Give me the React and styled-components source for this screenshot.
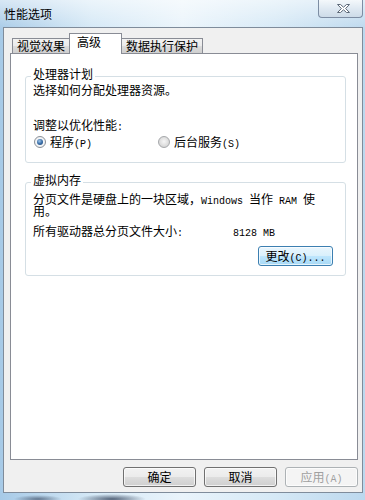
import React from 'react';
import styled, { createGlobalStyle } from 'styled-components';

const GlobalStyle = createGlobalStyle`
  html, body {
    margin: 0;
    padding: 0;
  }

  body {
    width: 365px;
    height: 500px;
    overflow: hidden;
    color: #000;
    font-family: "Noto Sans CJK SC", sans-serif;
    font-size: 12px;
  }
`;

const Frame = styled.div`
  display: flex;
  flex-direction: column;
  width: 365px;
  height: 500px;
  background:
    radial-gradient(ellipse 34px 5px at 112px 499px, rgba(40, 55, 80, 0.75), transparent),
    radial-gradient(ellipse 24px 4px at 38px 499px, rgba(40, 55, 80, 0.6), transparent),
    linear-gradient(180deg, rgba(255, 255, 255, 0.55) 0, rgba(255, 255, 255, 0) 30px),
    linear-gradient(90deg, #a7cae7 0, #d4e8f6 25%, #eaf4fb 50%, #d6e9f6 75%, #bcd8ee 100%);
`;

const TitleBar = styled.div`
  display: flex;
  align-items: flex-start;
  height: 27px;
  padding-left: 4px;
`;

const Title = styled.span`
  line-height: 27px;
  font-size: 12px;
`;

const CloseButton = styled.div`
  display: flex;
  align-items: center;
  justify-content: center;
  box-sizing: border-box;
  width: 45px;
  height: 18px;
  margin-left: auto;
  margin-right: 2px;
  padding-left: 6px;
  border: 1px solid #7d8da3;
  border-top: none;
  border-radius: 0 0 4px 4px;
  background: linear-gradient(180deg, #f4f8fb 0, #dfe9f2 50%, #cddbe8 100%);
`;

const Body = styled.div`
  display: flex;
  flex-direction: column;
  box-sizing: border-box;
  height: 466px;
  margin: 0 2px 0 3px;
  padding: 6px 4px 0 6px;
  border: 1px solid #7f8c9b;
  background: #f0f0f0;
`;

const TabRow = styled.div`
  display: flex;
  align-items: flex-end;
  height: 20px;
  margin-bottom: -1px;
  padding-left: 2px;
`;

const Tab = styled.div`
  box-sizing: border-box;
  width: ${p => p.$w}px;
  height: ${p => (p.$active ? 21 : 15)}px;
  margin: ${p => (p.$active ? '0 -1px 0 -1px' : '0 0 1px 0')};
  padding-left: ${p => (p.$active ? 7 : 0)}px;
  position: relative;
  z-index: ${p => (p.$active ? 1 : 0)};
  border: 1px solid #898c95;
  border-bottom: none;
  background: ${p => (p.$active ? '#fff' : 'linear-gradient(180deg, #f2f2f2 0, #ebebeb 50%, #dddddd 51%, #cfcfcf 100%)')};
  line-height: ${p => (p.$active ? 16 : 14)}px;
  text-align: ${p => (p.$active ? 'left' : 'center')};
  white-space: nowrap;
`;

const Panel = styled.div`
  box-sizing: border-box;
  height: 407px;
  padding: 0 11px 0 14px;
  border: 1px solid #898c95;
  background: #fff;
`;

const Group = styled.fieldset`
  min-width: 0;
  margin: ${p => p.$top}px 0 0;
  padding: 0 12px 9px 7px;
  border: 1px solid #d5dfe5;
  border-radius: 3px;
`;

const Legend = styled.legend`
  margin-left: -2px;
  padding: 0 2px 4px;
  line-height: 12px;
`;

const Line = styled.div`
  margin-top: ${p => p.$top || 0}px;
  line-height: 12px;
`;

const Lat = styled.span`
  font-family: "Liberation Mono", monospace;
  font-size: 10px;
  line-height: 0;
`;

const RadioRow = styled.div`
  display: flex;
  margin: 5px 0 5px;
  line-height: 12px;
`;

const Option = styled.label`
  display: flex;
  align-items: center;
  gap: 4px;
  width: ${p => p.$w}px;
`;

const Radio = styled.span`
  display: flex;
  align-items: center;
  justify-content: center;
  box-sizing: border-box;
  width: 12px;
  height: 12px;
  margin-left: 1px;
  border: 1px solid ${p => (p.$checked ? '#8a8f96' : '#a6a8ab')};
  border-radius: 50%;
  background: ${p => (p.$checked
    ? 'radial-gradient(circle at 50% 50%, #ffffff 0, #e9ecef 100%)'
    : 'radial-gradient(circle at 50% 45%, #f6f6f6 0, #dcdcdc 60%, #c9c9c9 100%)')};

  &::after {
    content: '';
    display: ${p => (p.$checked ? 'block' : 'none')};
    width: 6px;
    height: 6px;
    border-radius: 50%;
    background: radial-gradient(circle at 40% 35%, #9fc6ea 0, #3c6fa8 50%, #173e70 100%);
  }
`;

const SizeRow = styled.div`
  display: flex;
  align-items: baseline;
  margin-top: 8px;
  line-height: 12px;
`;

const SizeLabel = styled.span`
  width: 200px;
`;

const SizeValue = styled.span`
  font-family: "Liberation Mono", monospace;
  font-size: 10px;
`;

const ButtonRow = styled.div`
  display: flex;
  justify-content: flex-end;
  gap: 8px;
  margin-top: ${p => p.$top}px;
`;

const Button = styled.button`
  box-sizing: border-box;
  width: ${p => p.$w}px;
  height: 20px;
  padding: 0;
  border: 1px solid ${p => (p.$focus ? '#3c7fb1' : p.disabled ? '#adb2b5' : '#707070')};
  border-radius: 3px;
  background: ${p => (p.$focus
    ? 'linear-gradient(180deg, #eaf6fd 0, #d9f0fc 50%, #bee6fd 51%, #a7d9f5 100%)'
    : p.disabled
      ? '#f4f4f4'
      : 'linear-gradient(180deg, #f2f2f2 0, #ebebeb 50%, #dddddd 51%, #cfcfcf 100%)')};
  box-shadow: inset 0 0 0 1px rgba(255, 255, 255, 0.7);
  color: ${p => (p.disabled ? '#a0a0a0' : '#000')};
  font-family: "Noto Sans CJK SC", sans-serif;
  font-size: 12px;
  line-height: 18px;
`;

const CloseIcon = () => (
  <svg width="15" height="11" viewBox="0 0 15 11">
    <polygon
      points="1.5,1.5 4.5,1.5 7.5,4.2 10.5,1.5 13.5,1.5 9.6,5.5 13.5,9.5 10.5,9.5 7.5,6.8 4.5,9.5 1.5,9.5 5.4,5.5"
      fill="#fff"
      stroke="#5d6978"
      strokeWidth="1"
      strokeLinejoin="round"
    />
  </svg>
);

const App = () => (
  <Frame>
    <GlobalStyle />
    <TitleBar>
      <Title>性能选项</Title>
      <CloseButton>
        <CloseIcon />
      </CloseButton>
    </TitleBar>
    <Body>
      <TabRow>
        <Tab $w={58}>视觉效果</Tab>
        <Tab $w={53} $active>高级</Tab>
        <Tab $w={82}>数据执行保护</Tab>
      </TabRow>
      <Panel>
        <Group $top={14}>
          <Legend>处理器计划</Legend>
          <Line>选择如何分配处理器资源。</Line>
          <Line $top={23}>调整以优化性能<Lat>:</Lat></Line>
          <RadioRow>
            <Option $w={124}>
              <Radio $checked />
              <span>程序<Lat>(P)</Lat></span>
            </Option>
            <Option $w={120}>
              <Radio />
              <span>后台服务<Lat>(S)</Lat></span>
            </Option>
          </RadioRow>
        </Group>
        <Group $top={11}>
          <Legend>虚拟内存</Legend>
          <Line $top={3}>
            <span>分页文件是硬盘上的一块区域，</span>
            <Lat>Windows </Lat>
            <span>当作</span>
            <Lat> RAM </Lat>
            <span>使</span>
            <span>用。</span>
          </Line>
          <SizeRow>
            <SizeLabel>所有驱动器总分页文件大小<Lat>:</Lat></SizeLabel>
            <SizeValue>8128 MB</SizeValue>
          </SizeRow>
          <ButtonRow $top={6}>
            <Button $w={75} $focus>更改<Lat>(C)...</Lat></Button>
          </ButtonRow>
        </Group>
      </Panel>
      <ButtonRow $top={7}>
        <Button $w={73}>确定</Button>
        <Button $w={73}>取消</Button>
        <Button $w={73} disabled>应用<Lat>(A)</Lat></Button>
      </ButtonRow>
    </Body>
  </Frame>
);

export default App;
